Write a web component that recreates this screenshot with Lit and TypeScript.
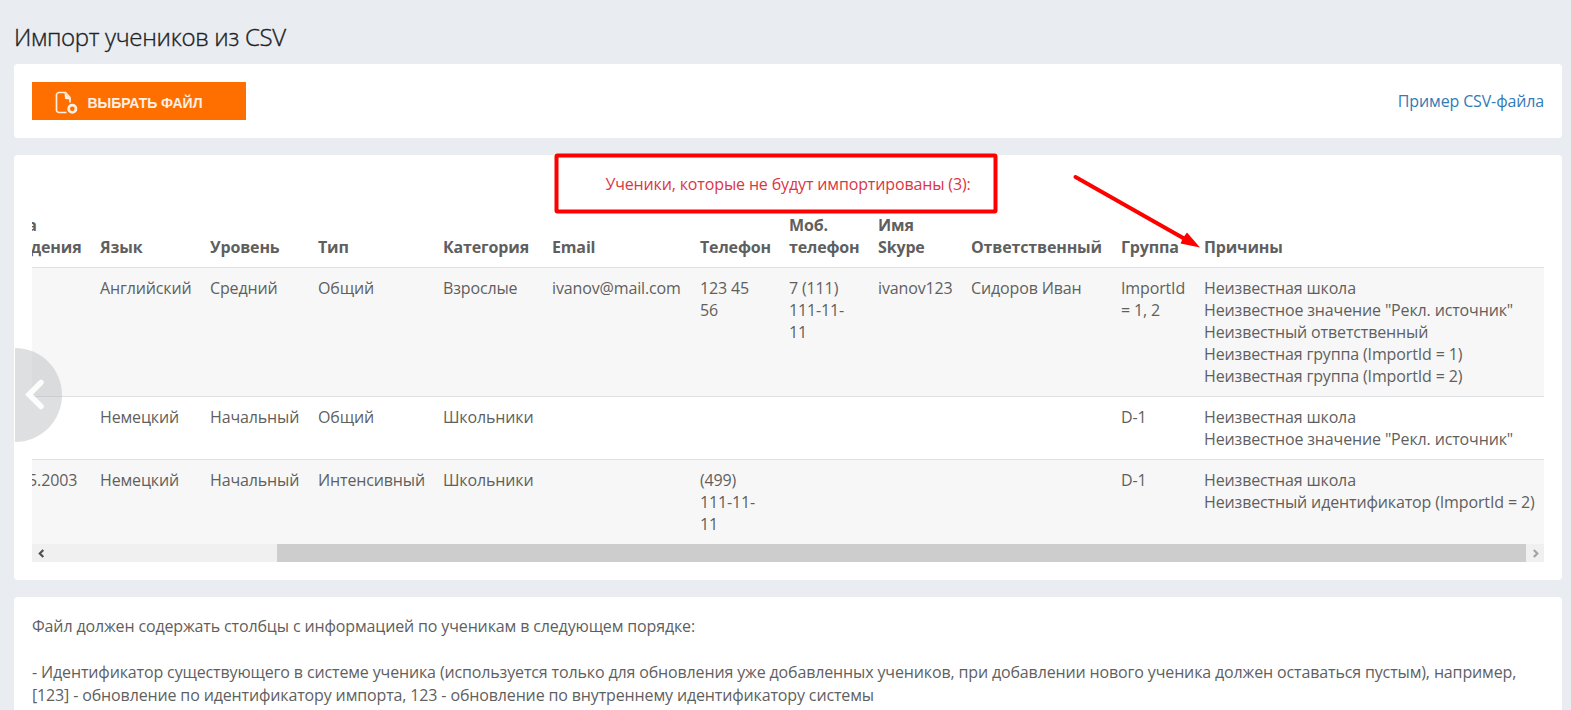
import { LitElement, html, css, svg } from "lit";
import { customElement } from "lit/decorators.js";

interface Student {
  birth: string;
  lang: string;
  level: string;
  type: string;
  category: string;
  email: string;
  phone: string;
  mobile: string;
  skype: string;
  responsible: string;
  group: string;
  reasons: string[];
}

const HEADERS = [
  "Дата рождения", "Язык", "Уровень", "Тип", "Категория", "Email", "Телефон",
  "Моб. телефон", "Имя Skype", "Ответственный", "Группа", "Причины",
];

const STUDENTS: Student[] = [
  {
    birth: "", lang: "Английский", level: "Средний", type: "Общий", category: "Взрослые",
    email: "ivanov@mail.com", phone: "123 45 56", mobile: "7 (111) 111-11-11", skype: "ivanov123",
    responsible: "Сидоров Иван", group: "ImportId = 1, 2",
    reasons: [
      "Неизвестная школа",
      'Неизвестное значение "Рекл. источник"',
      "Неизвестный ответственный",
      "Неизвестная группа (ImportId = 1)",
      "Неизвестная группа (ImportId = 2)",
    ],
  },
  {
    birth: "", lang: "Немецкий", level: "Начальный", type: "Общий", category: "Школьники",
    email: "", phone: "", mobile: "", skype: "", responsible: "", group: "D-1",
    reasons: ["Неизвестная школа", 'Неизвестное значение "Рекл. источник"'],
  },
  {
    birth: "15.05.2003", lang: "Немецкий", level: "Начальный", type: "Интенсивный", category: "Школьники",
    email: "", phone: "(499) 111-11-11", mobile: "", skype: "", responsible: "", group: "D-1",
    reasons: ["Неизвестная школа", "Неизвестный идентификатор (ImportId = 2)"],
  },
];

@customElement("reject-table")
class RejectTable extends LitElement {
  static styles = css`
    :host { display: block; }
    .viewport { display: flex; justify-content: flex-end; overflow: hidden; }
    table { flex: none; width: 1556px; table-layout: fixed; border-collapse: separate; border-spacing: 0; line-height: 22px; }
    .c0 { width: 103px; } .c1 { width: 110px; } .c2 { width: 108px; } .c3 { width: 125px; }
    .c4 { width: 109px; } .c5 { width: 148px; } .c6 { width: 89px; } .c7 { width: 89px; }
    .c8 { width: 93px; } .c9 { width: 150px; } .c10 { width: 83px; } .c11 { width: 349px; }
    th { text-align: left; vertical-align: bottom; font-weight: 700; padding: 9px; letter-spacing: -0.15px; }
    td { vertical-align: top; padding: 9px; border-top: 1px solid #dde0e3; }
    .odd { background: #f7f7f7; }
    .bar { display: grid; grid-template-columns: 18px 227px 1fr 18px; height: 18px; background: #f0f0f0; }
    .thumb { grid-column: 3; background: #cdcdcd; }
    .arrow { width: 18px; height: 18px; display: block; }
  `;
  render() {
    return html`
      <div class="viewport">
        <table>
          <colgroup>${HEADERS.map((_, i) => html`<col class="c${i}" />`)}</colgroup>
          <thead><tr>${HEADERS.map((h) => html`<th>${h}</th>`)}</tr></thead>
          <tbody>
            ${STUDENTS.map((s, i) => html`<tr class=${i % 2 ? "" : "odd"}>
              ${[s.birth, s.lang, s.level, s.type, s.category, s.email, s.phone, s.mobile, s.skype, s.responsible, s.group]
                .map((v) => html`<td>${v}</td>`)}
              <td>${s.reasons.map((r) => html`<div>${r}</div>`)}</td>
            </tr>`)}
          </tbody>
        </table>
      </div>
      <div class="bar">
        <svg class="arrow" viewBox="0 0 18 18"><path d="M11.300 6 7.800 9.500l3.500 3.500" fill="none" stroke="#505050" stroke-width="2.200" /></svg>
        <div class="thumb"></div>
        <svg class="arrow" viewBox="0 0 18 18"><path d="M7.800 6 11.300 9.500 7.800 13" fill="none" stroke="#a3a3a3" stroke-width="2.200" /></svg>
      </div>`;
  }
}

@customElement("app-root")
class AppRoot extends LitElement {
  static styles = css`
    :host {
      display: block; height: 710px; box-sizing: border-box; overflow: hidden; position: relative;
      background: #e9edf2; color: #5f5f5f; padding: 20px 9px 0 14px;
      font: 16px/22.86px "Open Sans", "Noto Sans", sans-serif; letter-spacing: -0.14px;
    }
    h1 {
      margin: 0; font-size: 24px; line-height: 34px; font-weight: 300; color: #222; padding-bottom: 10px;
      letter-spacing: -0.31px; -webkit-text-stroke: 0.35px #222;
    }
    .card { background: #fff; border-radius: 4px; padding: 18px; margin-bottom: 17px; }
    .upload { display: flex; align-items: center; justify-content: space-between; }
    .pick {
      display: flex; align-items: center; width: 213.500px; height: 38px; box-sizing: border-box; padding: 3px 0 0 23px;
      border: 0; background: #ff6f00; color: #fff0e4; gap: 8.500px;
      font: 700 14px/20px "Liberation Sans", sans-serif; letter-spacing: -0.05px;
    }
    .file { width: 24px; height: 24px; flex: none; }
    .link { color: #337ab7; text-decoration: none; }
    .result { position: relative; }
    .warn { text-align: center; color: #dc3545; line-height: 23px; padding-bottom: 9px; }
    .back { position: absolute; left: 1px; top: 193px; width: 47px; height: 94px; }
    .info p { margin: 0 0 22.860px; }
    .info { padding-bottom: 60px; }
    .marks { position: absolute; left: 0; top: 0; width: 1571px; height: 710px; pointer-events: none; }
  `;
  render() {
    return html`
      <h1>Импорт учеников из CSV</h1>
      <section class="card upload">
        <button class="pick">
          <svg class="file" viewBox="0 0 24 24" fill="none" stroke="#fff0e4" stroke-width="1.700">
            <path d="M11.500 21.500H4a2.500 2.500 0 0 1-2.500-2.500V4A2.500 2.500 0 0 1 4 1.500h6.500L15 6.500v5" />
            <path d="M9.500 1.500 15.800 8.500 10 8z" fill="#fff0e4" stroke="none" />
            <circle cx="17.300" cy="17.800" r="3.700" stroke-width="2.700" />
          </svg>
          <span>ВЫБРАТЬ ФАЙЛ</span>
        </button>
        <a class="link">Пример CSV-файла</a>
      </section>
      <section class="card result">
        <div class="warn">Ученики, которые не будут импортированы (3):</div>
        <reject-table></reject-table>
        <svg class="back" viewBox="0 0 47 94">
          <circle cx="0" cy="47" r="47" fill="#b4b8bc" fill-opacity=".45" />
          <path d="M26 34.500 14 46.500 26 58.500" fill="none" stroke="#fff" stroke-opacity=".92" stroke-width="5.500" stroke-linecap="round" />
        </svg>
      </section>
      <section class="card info">
        <p>Файл должен содержать столбцы с информацией по ученикам в следующем порядке:</p>
        <p>- Идентификатор существующего в системе ученика (используется только для обновления уже добавленных учеников, при добавлении нового ученика должен оставаться пустым), например, [123] - обновление по идентификатору импорта, 123 - обновление по внутреннему идентификатору системы</p>
      </section>
      <svg class="marks" viewBox="0 0 1571 710">
        ${svg`<rect x="556.500" y="155.500" width="439" height="56" rx="1" fill="none" stroke="#f00" stroke-width="4" />
        <path d="M1075.500 177 1184 238.500" stroke="#f00" stroke-width="4" stroke-linecap="round" />
        <path d="M1200 247.500 1180.500 243.500 1183 238 1187 232.500z" fill="#f00" />`}
      </svg>`;
  }
}
